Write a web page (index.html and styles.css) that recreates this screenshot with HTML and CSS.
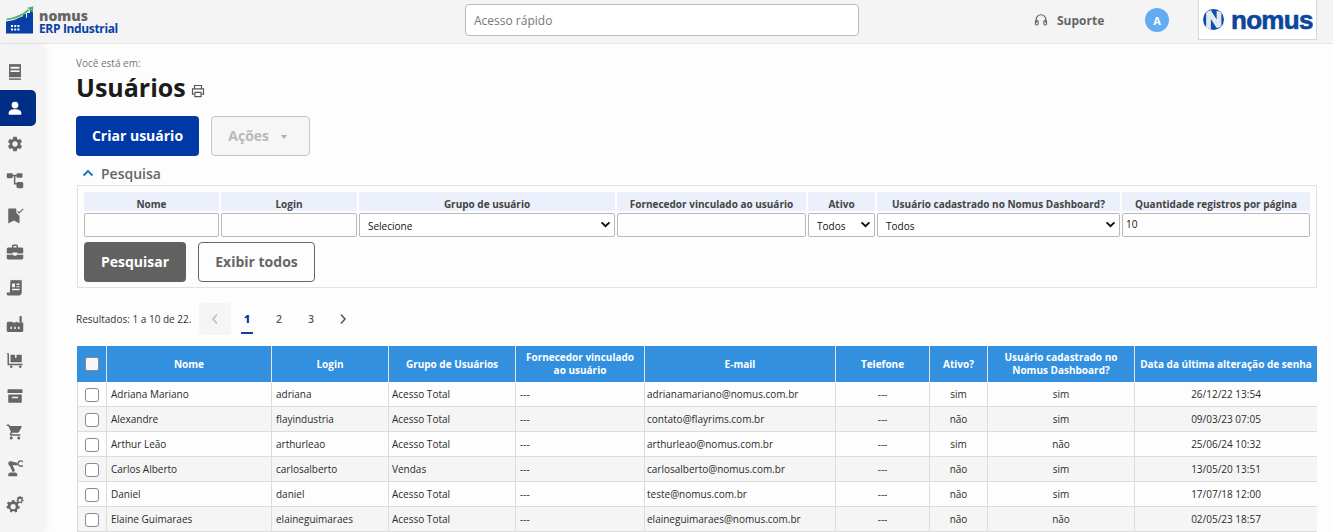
FILE: index.html
```html
<!DOCTYPE html>
<html lang="pt-BR">
<head>
<meta charset="utf-8">
<title>Usuários - Nomus ERP Industrial</title>
<link rel="stylesheet" href="styles.css">
</head>
<body>
<header class="topbar">
  <div class="brand">
    <svg class="brand-mark" viewBox="0 0 28 28" aria-hidden="true">
      <path fill="#0a3fa5" d="M0 15.500 8 14l8-3.500 1 0V8h3v4l1-.5V7h3V4h3v23.500H0z"/>
      <path fill="none" stroke="#f4f4f4" stroke-width="2.600" d="M0 13.500c9-1 16-4 24-11"/>
      <path fill="none" stroke="#4fb36c" stroke-width="1.700" d="M.5 13.500c9-1 16-4 22-9.500"/>
      <path fill="#4fb36c" d="M27.500 .2l-.9 6.800-5.200-5.200z"/>
      <path fill="#fff" d="M5 19h2v2H5zm3.200 0h2v2h-2zm3.200 0h2v2h-2zM5 22.500h2v2H5zm3.200 0h2v2h-2zm3.200 0h2v2h-2z"/>
    </svg>
    <div class="brand-text">
      <span class="brand-name">nomus</span>
      <span class="brand-product">ERP Industrial</span>
    </div>
  </div>
  <input class="quick" type="text" placeholder="Acesso rápido">
  <a class="support">
    <svg class="support-icon" viewBox="0 0 16 16" aria-hidden="true"><path fill="none" stroke="#666" stroke-width="1.400" d="M2.500 11V7.500a5.500 5.500 0 0 1 11 0V11"/><rect x="1.700" y="8.700" width="3" height="5" rx="1" fill="none" stroke="#666" stroke-width="1.300"/><rect x="11.300" y="8.700" width="3" height="5" rx="1" fill="none" stroke="#666" stroke-width="1.300"/></svg>
    Suporte
  </a>
  <span class="avatar">A</span>
  <div class="company-logo">
    <svg class="company-mark" viewBox="0 0 20 20" aria-hidden="true">
      <circle cx="10" cy="10" r="10" fill="#0d4fa8"/>
      <path fill="#e4e8ee" d="M3 17.500V3.500c2-1.600 3-2 4.500-2.300L13 10V2c1.500 0 3 .6 4.500 1.700V16c-1.500 1.500-3 2-4.500 2.200L7.500 9.500V19C6 18.800 4.500 18.500 3 17.500z"/>
    </svg>
    <span class="company-name">nomus</span>
  </div>
</header>
<div class="layout">
  <nav class="sidebar">
    <a class="nav-item"><svg viewBox="0 0 24 24"><path d="M4 1.500h16v17.500H4z"/><path fill="#f4f4f4" d="M6 5h12v2.500H6zM6 9.500h12V12H6z"/><path d="M4 20.500h16v2H4z"/></svg></a>
    <a class="nav-item active"><svg viewBox="0 0 24 24"><circle cx="12" cy="8" r="4.500"/><path d="M3.500 20v-1.500c0-3 3.500-5 8.500-5s8.500 2 8.500 5V20c0 .6-.4 1-1 1h-15c-.6 0-1-.4-1-1z"/></svg></a>
    <a class="nav-item"><svg viewBox="0 0 24 24"><path d="M19.140 12.940c.04-.3.06-.61.06-.94 0-.32-.02-.64-.07-.94l2.030-1.580c.18-.14.23-.41.12-.61l-1.920-3.320c-.12-.22-.37-.29-.59-.22l-2.390.96c-.5-.38-1.030-.7-1.620-.94l-.36-2.540c-.04-.24-.24-.41-.48-.41h-3.840c-.24 0-.43.17-.47.41l-.36 2.540c-.59.24-1.130.57-1.620.94l-2.390-.96c-.22-.08-.47 0-.59.22L2.740 8.870c-.12.21-.08.47.12.61l2.030 1.580c-.05.3-.09.63-.09.94s.02.64.07.94l-2.030 1.580c-.18.14-.23.41-.12.61l1.920 3.320c.12.22.37.29.59.22l2.390-.96c.5.38 1.030.7 1.620.94l.36 2.540c.05.24.24.41.48.41h3.840c.24 0 .44-.17.47-.41l.36-2.540c.59-.24 1.130-.56 1.620-.94l2.390.96c.22.08.47 0 .59-.22l1.920-3.320c.12-.22.07-.47-.12-.61l-2.010-1.580zM12 15.600c-1.980 0-3.600-1.620-3.600-3.600s1.620-3.600 3.600-3.600 3.600 1.620 3.600 3.600-1.620 3.600-3.600 3.600z"/></svg></a>
    <a class="nav-item"><svg viewBox="0 0 24 24"><path d="M1 4.500C1 3.500 1.800 3 2.500 3h5C8.500 3 9 3.800 9 4.500V5h5v-.5c0-1 .8-1.500 1.500-1.500h5c1 0 1.500.8 1.500 1.500v3c0 1-.8 1.500-1.500 1.500h-5c-1 0-1.500-.8-1.500-1.500V7h-1.500v9H14c.3-1 1-1.500 2-1.500h5c1 0 2 .8 2 1.500v5c0 1-1 2-2 2h-5c-1 0-2-1-2-2v-3h-3.500V7H9v1C9 9 8.200 9.500 7.500 9.500h-5C1.500 9.500 1 8.700 1 8z"/></svg></a>
    <a class="nav-item"><svg viewBox="0 0 24 24"><path d="M3 2h10.500l.5 6 4 3.500V22l-7.500-4L3 22z"/><path fill="none" stroke="#666" stroke-width="1.500" d="M15.500 6l2 2L23 2.500"/></svg></a>
    <a class="nav-item"><svg viewBox="0 0 24 24"><path d="M8 6V4c0-1 .8-2 2-2h4c1.200 0 2 1 2 2v2h5c1 0 2 1 2 2v5c0 .6-.5 1-1 1h-7v-1.500h-6V14H2c-.5 0-1-.4-1-1V8c0-1 1-2 2-2zm2 0h4V4h-4z"/><path d="M1 15.500h9v1.500h4v-1.500h9V20c0 1-1 2-2 2H3c-1 0-2-1-2-2z"/></svg></a>
    <a class="nav-item"><svg viewBox="0 0 24 24"><path fill-rule="evenodd" d="M6 1l1.500 1L9 1l1.500 1L12 1l1.500 1L15 1l1.500 1L18 1l1.500 1L21 1v17c0 2-1.500 4-3.500 4H3c-1.500 0-2-1-2-2v-2h4zm2 5v5h4V6zm6 0v2h4V6zm0 3.500v1.500h4V9.500zM8 13v2h10v-2z"/></svg></a>
    <a class="nav-item"><svg viewBox="0 0 24 24"><path d="M18 1.500h3V10h-3z"/><path fill-rule="evenodd" d="M3 9h5c.6 0 1 .4 1 1h4V9c0-.4.3-.6.6-.3l2 1.300H23v11c0 1-.6 1.500-1.500 1.500h-19C1.600 22.500 1 22 1 21V11c0-1 .9-2 2-2zm3 6.500v3h2v-3zm5 0v3h2v-3zm5 0v3h2v-3z"/></svg></a>
    <a class="nav-item"><svg viewBox="0 0 24 24"><path d="M1 3h3v14h18v2H2V4H1z"/><path fill-rule="evenodd" d="M6 5h6v4h2V5h7v10H6z"/><circle cx="7" cy="21" r="1.700"/><circle cx="19" cy="21" r="1.700"/></svg></a>
    <a class="nav-item"><svg viewBox="0 0 24 24"><path d="M3 3h18c.6 0 1 .4 1 1v4H2V4c0-.6.4-1 1-1z"/><path fill-rule="evenodd" d="M3 10h18v10c0 .6-.4 1-1 1H4c-.6 0-1-.4-1-1zm5 3v2h8v-2z"/></svg></a>
    <a class="nav-item"><svg viewBox="0 0 24 24"><path d="M7 18c-1.100 0-1.990.9-1.990 2S5.900 22 7 22s2-.9 2-2-.9-2-2-2zM1 2v2h2l3.600 7.590-1.350 2.450c-.16.28-.25.61-.25.960 0 1.100.9 2 2 2h12v-2H7.420c-.14 0-.25-.11-.25-.25l.03-.12.9-1.630h7.450c.75 0 1.410-.41 1.750-1.030l3.580-6.490c.08-.14.12-.31.12-.48 0-.55-.45-1-1-1H5.210l-.94-2H1zm16 16c-1.100 0-1.990.9-1.990 2s.89 2 1.990 2 2-.9 2-2-.9-2-2-2z"/></svg></a>
    <a class="nav-item"><svg viewBox="0 0 24 24"><path d="M3 21c0-1.500 1-3 3-3h6c2 0 3 1.500 3 3v2H3z"/><path d="M4 7l3-3 5 11.500-3 2z"/><path d="M6 3l9 2 .5 3.500-8.500-.5z"/><circle cx="6" cy="6" r="3"/><path fill="none" stroke="#666" stroke-width="1.800" d="M22.500 3.500c-2.500-1.800-6-1.200-6.500 2.500.5 3.500 4 4.500 6.500 2.800"/></svg></a>
    <a class="nav-item"><svg viewBox="0 0 24 24"><path fill-rule="evenodd" d="M8.500 7l2.500-.5.6 2.200 1.900 1 2-1.100 1.600 1.800-1.200 2 .5 2.200 2.100.9-.4 2.500-2.300.3-1.300 1.800.5 2.300-2.300 1-1.500-1.800-2.200-.1-1.500 1.900-2.300-1 .4-2.400-1.400-1.700-2.400-.2L0 15.700l2.100-1 .5-2.200L1.300 10.500 3 8.800l2 1.100 2-1zM9.500 12a3.500 3.500 0 1 0 0 7 3.500 3.500 0 0 0 0-7z"/><path fill-rule="evenodd" d="M18 1l1.500.2.300 1.300 1.200.6 1.200-.5.8 1.200-.8 1.100.2 1.300 1.200.6-.3 1.400-1.300.2-.8 1.100.4 1.200-1.300.7-.9-1-1.300 0-.9 1-1.300-.7.4-1.200-.8-1.100-1.300-.2-.3-1.400 1.200-.6.2-1.300-.8-1.100.8-1.200 1.200.5 1.200-.6zm.7 4a2 2 0 1 0 0 4 2 2 0 0 0 0-4z"/></svg></a>
  </nav>
  <main class="content">
    <p class="crumb">Você está em:</p>
    <h1 class="title">Usuários
      <svg class="print" viewBox="0 0 16 16" aria-hidden="true"><path fill="none" stroke="#555" stroke-width="1.300" d="M4 5V1.700h8V5M4 11.500H1.700V5.500h12.600v6H12"/><path fill="none" stroke="#555" stroke-width="1.300" d="M4.500 9.500h7v5h-7z"/></svg>
    </h1>
    <div class="actions">
      <button class="btn btn-primary">Criar usuário</button>
      <button class="btn btn-disabled">Ações <span class="caret"></span></button>
    </div>
    <div class="search-head">
      <svg class="chev" viewBox="0 0 12 8" aria-hidden="true"><path fill="none" stroke="#1a6fc4" stroke-width="1.800" d="M1.500 6.500 6 2l4.500 4.500"/></svg>
      Pesquisa
    </div>
    <section class="search-panel">
      <div class="filters">
        <label class="filter-label">Nome</label>
        <label class="filter-label">Login</label>
        <label class="filter-label">Grupo de usuário</label>
        <label class="filter-label">Fornecedor vinculado ao usuário</label>
        <label class="filter-label">Ativo</label>
        <label class="filter-label">Usuário cadastrado no Nomus Dashboard?</label>
        <label class="filter-label">Quantidade registros por página</label>
        <input class="field" type="text">
        <input class="field" type="text">
        <div class="field select"><span>Selecione</span><svg viewBox="0 0 12 8"><path fill="none" stroke="#111" stroke-width="2.200" d="M1.500 1.500 6 6l4.500-4.500"/></svg></div>
        <input class="field" type="text">
        <div class="field select"><span>Todos</span><svg viewBox="0 0 12 8"><path fill="none" stroke="#111" stroke-width="2.200" d="M1.500 1.500 6 6l4.500-4.500"/></svg></div>
        <div class="field select"><span>Todos</span><svg viewBox="0 0 12 8"><path fill="none" stroke="#111" stroke-width="2.200" d="M1.500 1.500 6 6l4.500-4.500"/></svg></div>
        <input class="field field-num" type="text" value="10">
      </div>
      <div class="search-buttons">
        <button class="btn btn-dark">Pesquisar</button>
        <button class="btn btn-outline">Exibir todos</button>
      </div>
    </section>
    <div class="pager-row">
      <span class="results">Resultados: 1 a 10 de 22.</span>
      <div class="pager">
        <span class="page prev"><svg viewBox="0 0 8 12"><path fill="none" stroke="#bbb" stroke-width="1.500" d="M6 1.500 2 6l4 4.500"/></svg></span>
        <span class="page current">1</span>
        <span class="page">2</span>
        <span class="page">3</span>
        <span class="page"><svg viewBox="0 0 8 12"><path fill="none" stroke="#555" stroke-width="1.500" d="M2 1.500 6 6l-4 4.500"/></svg></span>
      </div>
    </div>
    <table class="grid">
      <colgroup>
        <col class="c-check"><col class="c-name"><col class="c-login"><col class="c-group"><col class="c-supplier"><col class="c-mail"><col class="c-phone"><col class="c-active"><col class="c-dash"><col class="c-date">
      </colgroup>
      <thead>
        <tr>
          <th><span class="check head"></span></th><th>Nome</th><th>Login</th><th>Grupo de Usuários</th><th>Fornecedor vinculado ao usuário</th><th>E-mail</th><th>Telefone</th><th>Ativo?</th><th>Usuário cadastrado no Nomus Dashboard?</th><th>Data da última alteração de senha</th>
        </tr>
      </thead>
      <tbody>
        <tr><td class="mid"><span class="check"></span></td><td>Adriana Mariano</td><td>adriana</td><td>Acesso Total</td><td>---</td><td>adrianamariano@nomus.com.br</td><td class="mid">---</td><td class="mid">sim</td><td class="mid">sim</td><td class="mid">26/12/22 13:54</td></tr>
        <tr><td class="mid"><span class="check"></span></td><td>Alexandre</td><td>flayindustria</td><td>Acesso Total</td><td>---</td><td>contato@flayrims.com.br</td><td class="mid">---</td><td class="mid">não</td><td class="mid">sim</td><td class="mid">09/03/23 07:05</td></tr>
        <tr><td class="mid"><span class="check"></span></td><td>Arthur Leão</td><td>arthurleao</td><td>Acesso Total</td><td>---</td><td>arthurleao@nomus.com.br</td><td class="mid">---</td><td class="mid">sim</td><td class="mid">não</td><td class="mid">25/06/24 10:32</td></tr>
        <tr><td class="mid"><span class="check"></span></td><td>Carlos Alberto</td><td>carlosalberto</td><td>Vendas</td><td>---</td><td>carlosalberto@nomus.com.br</td><td class="mid">---</td><td class="mid">não</td><td class="mid">sim</td><td class="mid">13/05/20 13:51</td></tr>
        <tr><td class="mid"><span class="check"></span></td><td>Daniel</td><td>daniel</td><td>Acesso Total</td><td>---</td><td>teste@nomus.com.br</td><td class="mid">---</td><td class="mid">não</td><td class="mid">sim</td><td class="mid">17/07/18 12:00</td></tr>
        <tr><td class="mid"><span class="check"></span></td><td>Elaine Guimaraes</td><td>elaineguimaraes</td><td>Acesso Total</td><td>---</td><td>elaineguimaraes@nomus.com.br</td><td class="mid">---</td><td class="mid">não</td><td class="mid">não</td><td class="mid">02/05/23 18:57</td></tr>
      </tbody>
    </table>
  </main>
</div>
</body>
</html>
```
FILE: styles.css
```css
* { box-sizing: border-box; }
html, body { height: 100%; overflow: hidden; }
body { margin: 0; font-family: "Open Sans", "Liberation Sans", sans-serif; color: #222; background: #fdfdfd; }

.topbar { height: 44px; display: flex; align-items: flex-start; background: #f4f4f4; border-bottom: 1px solid #e6e6e6; }
.brand { width: 465px; display: flex; align-items: flex-start; padding: 6px 0 0 6px; }
.brand-mark { width: 28px; height: 28px; flex: none; }
.brand-text { display: flex; flex-direction: column; margin-left: 5px; margin-top: 3px; }
.brand-name { font-size: 14px; line-height: 13px; font-weight: 800; color: #666; }
.brand-product { font-size: 12px; line-height: 14px; font-weight: 700; color: #0a3fa5; letter-spacing: -.35px; }
.quick { width: 394px; height: 32px; margin-top: 4px; padding: 0 8px; border: 1px solid #bbb; border-radius: 4px; background: #fff; font: 12px "Open Sans", sans-serif; }
.quick::placeholder { color: #777; opacity: 1; }
.support { display: flex; align-items: center; height: 40px; margin-left: 175px; width: 111px; font-size: 12px; font-weight: 700; color: #666; gap: 9px; }
.support-icon { width: 14px; height: 14px; }
.avatar { width: 24px; height: 24px; margin-top: 8px; border-radius: 50%; background: #64acf2; color: #fff; font-size: 11px; font-weight: 700; display: flex; align-items: center; justify-content: center; }
.company-logo { width: 119px; height: 40px; margin-left: 29px; background: #fff; border: 1px solid #d6d6d6; border-top: 0; display: flex; align-items: center; padding-left: 4px; gap: 7px; }
.company-mark { width: 21px; height: 21px; flex: none; }
.company-name { font-family: "Liberation Sans", sans-serif; font-size: 26px; line-height: 24px; font-weight: 700; color: #0c479c; letter-spacing: -.7px; -webkit-text-stroke: .6px #0c479c; }

.layout { display: flex; height: 488px; }
.sidebar { width: 43px; flex: none; background: #f4f4f4; padding-top: 10px; box-shadow: 3px 0 8px rgba(0,0,0,.05); display: flex; flex-direction: column; }
.nav-item { width: 36px; height: 36px; flex: none; display: flex; align-items: center; justify-content: center; padding-right: 6px; fill: #666; }
.nav-item svg { width: 18px; height: 18px; }
.nav-item.active { background: #002d85; border-radius: 0 5px 5px 0; fill: #fff; }

.content { flex: 1; min-width: 0; padding: 12px 16px 0 33px; }
.crumb { margin: 0; font-size: 10px; line-height: 15px; color: #777; }
.title { margin: 2px 0 0; font-size: 25px; line-height: 28px; font-weight: 700; color: #1b1b1b; display: flex; align-items: center; gap: 5px; }
.print { width: 14px; height: 14px; margin-top: 8px; }
.actions { display: flex; gap: 12px; margin-top: 15px; }
.btn { height: 40px; border-radius: 4px; font: 700 14px "Open Sans", sans-serif; padding: 0 0 2px; }
.btn-primary { width: 123px; background: #0039a6; border: 0; color: #fff; }
.btn-disabled { width: 99px; background: #f6f6f6; border: 1px solid #c6c6c6; color: #b9b9b9; padding-right: 6px; }
.caret { display: inline-block; width: 0; height: 0; border: 3.5px solid transparent; border-top: 4px solid #b0b0b0; border-bottom: 0; margin: 0 0 2px 8px; }
.search-head { display: flex; align-items: center; height: 20px; margin-top: 7px; padding-left: 6px; font-size: 14px; font-weight: 600; color: #666; gap: 7px; }
.chev { width: 12px; height: 8px; }
.search-panel { margin: 2px 0 0 1px; padding: 6px 6px 5px; border: 1px solid #e2e2e2; width: 1240px; }
.filters { display: grid; grid-template-columns: 135px 136px 256px 189px 67px 243px 188px; gap: 2px; grid-template-rows: 19px 24px; }
.filter-label { background: #ebf0fb; font-size: 10px; font-weight: 700; color: #444; display: flex; align-items: center; justify-content: center; padding-top: 4px; white-space: nowrap; }
.field { border: 1px solid #b9b9b9; border-radius: 2px; background: #fdfdfd; font: 10px "Open Sans", sans-serif; color: #111; height: 24px; min-width: 0; padding: 0 3px; }
.select { background: #fff; display: flex; align-items: center; justify-content: space-between; padding: 2px 3px 0 8px; }
.select svg { width: 11px; height: 7px; margin-top: -3px; }
.field-num { padding-bottom: 2px; }
.search-buttons { display: flex; gap: 12px; margin-top: 5px; }
.btn-dark { width: 102px; background: #616161; border: 0; color: #fff; }
.btn-outline { width: 117px; background: #fdfdfd; border: 1px solid #666; color: #666; }

.pager-row { display: flex; align-items: center; margin-top: 15px; height: 32px; }
.results { font-size: 10px; color: #333; width: 123px; white-space: nowrap; }
.pager { display: flex; }
.page { width: 32px; height: 32px; display: flex; align-items: center; justify-content: center; font-size: 10.5px; font-weight: 600; color: #555; }
.page svg { width: 8px; height: 12px; }
.prev { background: #f5f5f5; border-radius: 4px; }
.current { font-weight: 800; color: #0a3a8f; background: linear-gradient(#0a3fa5, #0a3fa5) center 29px / 12px 2px no-repeat; }

.grid { width: 1240px; margin: 11px 0 0 1px; border-collapse: separate; border-spacing: 0; table-layout: fixed; font-size: 10px; }
.c-check { width: 30px; } .c-name { width: 165px; } .c-login { width: 117px; } .c-group { width: 127px; } .c-supplier { width: 129px; } .c-mail { width: 191px; } .c-phone { width: 94px; } .c-active { width: 58px; } .c-dash { width: 147px; } .c-date { width: 182px; }
.grid th { height: 36px; background: #3290df; color: #fff; font-size: 10px; line-height: 13px; font-weight: 700; text-align: center; padding: 0 4px; border-right: 1px solid #e6e6e6; }
.grid th:last-child { border-right: 0; padding: 0; white-space: nowrap; }
.grid td { height: 25px; padding: 0 4px; color: #2a2a2a; border-right: 1px solid #dcdcdc; border-bottom: 1px solid #dcdcdc; white-space: nowrap; overflow: hidden; }
.grid td:first-child { border-left: 1px solid #dcdcdc; }
.grid td:last-child { border-right: 0; }
.grid td:nth-child(4) { padding-left: 3px; }
.grid td:nth-child(6) { padding-left: 2px; }
.grid tbody tr:nth-child(even) td { background: #f5f5f5; }
.grid .mid { text-align: center; }
.check { display: inline-block; width: 14px; height: 14px; border: 1px solid #8a8a8a; border-radius: 3px; background: #fff; vertical-align: middle; }
.check.head { background: #f6f6f6; border-radius: 2px; }
```
